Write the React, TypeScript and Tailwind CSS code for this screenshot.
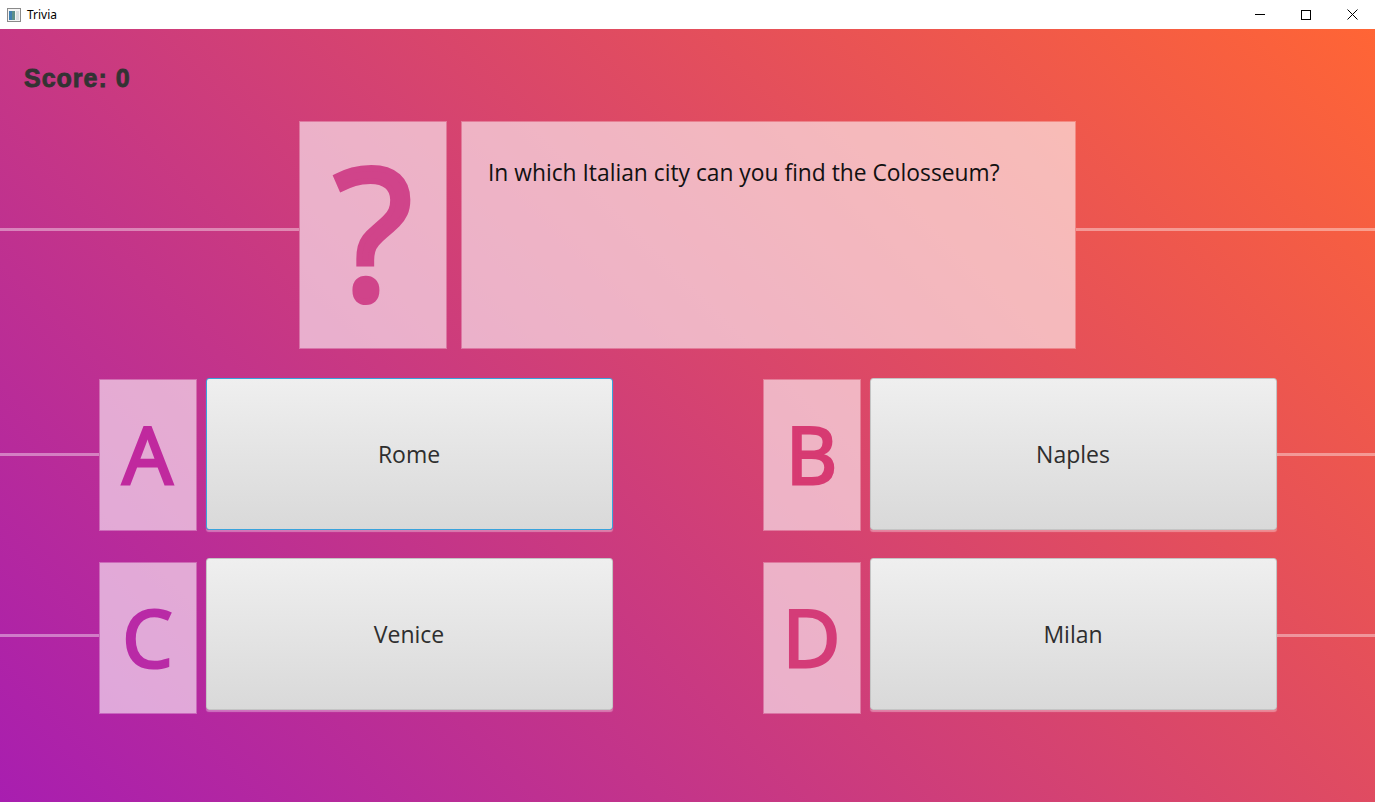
import React from "react";

const answers = [
  [
    { key: "A", text: "Rome", color: "text-[#c0299e]", focused: true },
    { key: "B", text: "Naples", color: "text-[#d73a72]", focused: false },
  ],
  [
    { key: "C", text: "Venice", color: "text-[#b92aa6]", focused: false },
    { key: "D", text: "Milan", color: "text-[#d43c78]", focused: false },
  ],
];

const TitleBar = () => (
  <div className="h-[29px] bg-white flex items-center shrink-0 font-['Noto_Sans',sans-serif]">
    {/* app icon */}
    <svg width="14" height="14" viewBox="0 0 14 14" className="ml-[7px]">
      <rect x="0.5" y="0.5" width="13" height="13" fill="#f4f4f4" stroke="#8a8a8a" />
      <rect x="2" y="3" width="6" height="9" fill="#5c8f8a" />
      <rect x="2" y="3" width="3" height="9" fill="#3f7fb0" />
      <rect x="9" y="3" width="3" height="9" fill="#d8dde0" />
    </svg>
    <span className="ml-[6px] text-[12px] text-black leading-none">Trivia</span>
    <div className="ml-auto flex h-full">
      <div className="w-[46px] flex items-center justify-center">
        <div className="w-[10px] h-px bg-black" />
      </div>
      <div className="w-[46px] flex items-center justify-center">
        <div className="w-[10px] h-[10px] border border-black" />
      </div>
      <div className="w-[46px] flex items-center justify-center">
        <svg width="11" height="11" viewBox="0 0 11 11">
          <path d="M0.5 0.5 L10.5 10.5 M10.5 0.5 L0.5 10.5" stroke="#000" strokeWidth="1" />
        </svg>
      </div>
    </div>
  </div>
);

const Line = ({ top }: { top: string }) => (
  <div className={`flex-1 h-[3px] bg-white/40 ${top}`} />
);

const Label = ({ letter, color, offset }: { letter: string; color: string; offset: string }) => (
  <div
    className={`w-[98px] h-[152px] ${offset} border border-white/30 bg-clip-padding bg-white/60 flex items-center justify-center shrink-0`}
  >
    <span
      className={`font-['Open_Sans',sans-serif] font-normal text-[79px] leading-none pb-1 [-webkit-text-stroke:3px_currentColor] ${color}`}
    >
      {letter}
    </span>
  </div>
);

const AnswerButton = ({ text, focused }: { text: string; focused: boolean }) => (
  <button
    className={`w-[407px] h-[152px] shrink-0 rounded-[3px] border ${
      focused ? "border-[#39a3dc]" : "border-[#c4c4c4]"
    } bg-[linear-gradient(180deg,#efefef,#d9d9d9)] shadow-[0_2px_1px_rgba(255,255,255,0.35)] flex items-center justify-center font-['Open_Sans',sans-serif] text-[23px] text-[#2e2e2e]`}
  >
    {text}
  </button>
);

export default function App() {
  return (
    <div className="w-[1375px] h-[802px] flex flex-col overflow-hidden">
      <TitleBar />
      <main className="flex-1 flex flex-col bg-[linear-gradient(45deg,#a81eb0,#ff6535)]">
        <div className="pl-6 pt-[37px] text-[25px] leading-[25px] font-bold tracking-[1px] text-[#333333] font-['Liberation_Sans',Arial,sans-serif] [-webkit-text-stroke:0.8px_#333333]">
          Score: 0
        </div>

        {/* question row */}
        <div className="mt-[30px] flex items-start h-[228px]">
          <Line top="mt-[107px]" />
          <div className="w-[148px] h-[228px] border border-white/30 bg-clip-padding bg-white/60 flex items-center justify-center">
            <span className="font-['Open_Sans',sans-serif] font-normal text-[182px] leading-none pb-[12px] [-webkit-text-stroke:6px_#d0448a] text-[#d0448a]">
              ?
            </span>
          </div>
          <div className="w-[14px]" />
          <div className="w-[615px] h-[228px] border border-white/30 bg-clip-padding bg-white/60 pl-[26px] pt-[34px]">
            <p className="font-['Open_Sans',sans-serif] text-[22.8px] text-[#111111]">
              In which Italian city can you find the Colosseum?
            </p>
          </div>
          <Line top="mt-[107px]" />
        </div>

        {/* answer rows */}
        {answers.map((row, i) => (
          <div key={i} className={`flex items-start ${i === 0 ? "mt-[29px]" : "mt-[27px]"}`}>
            <Line top={i === 0 ? "mt-[75px]" : "mt-[76px]"} />
            <Label letter={row[0].key} color={row[0].color} offset={i === 0 ? "mt-px" : "mt-1"} />
            <div className="w-[9px]" />
            <AnswerButton text={row[0].text} focused={row[0].focused} />
            <div className="w-[150px]" />
            <Label letter={row[1].key} color={row[1].color} offset={i === 0 ? "mt-px" : "mt-1"} />
            <div className="w-[9px]" />
            <AnswerButton text={row[1].text} focused={row[1].focused} />
            <Line top={i === 0 ? "mt-[75px]" : "mt-[76px]"} />
          </div>
        ))}
      </main>
    </div>
  );
}
